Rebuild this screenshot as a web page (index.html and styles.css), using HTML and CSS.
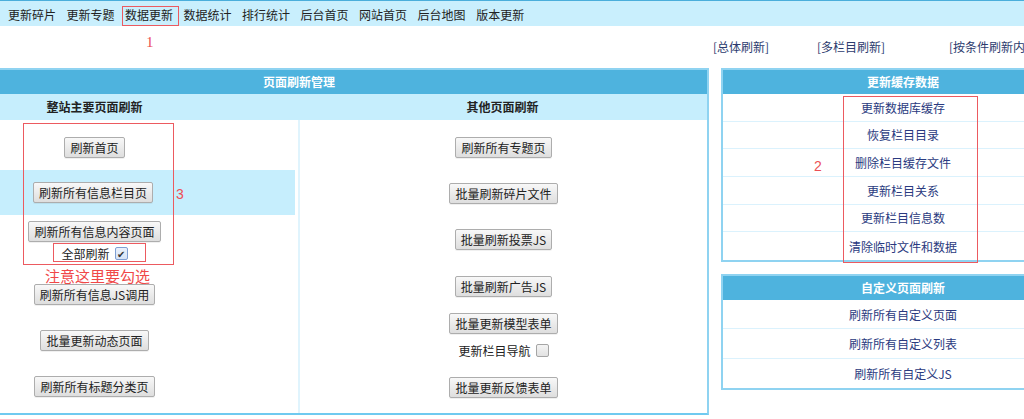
FILE: index.html
```html
<!DOCTYPE html>
<html lang="zh-CN">
<head>
<meta charset="utf-8">
<title>数据更新</title>
<link rel="stylesheet" href="styles.css">
</head>
<body>
<div class="topbar">
  <nav class="menu">
    <a class="menu-item">更新碎片</a>
    <a class="menu-item">更新专题</a>
    <a class="menu-item">数据更新</a>
    <a class="menu-item">数据统计</a>
    <a class="menu-item">排行统计</a>
    <a class="menu-item">后台首页</a>
    <a class="menu-item">网站首页</a>
    <a class="menu-item">后台地图</a>
    <a class="menu-item">版本更新</a>
  </nav>
</div>

<div class="quicklinks">
  <a class="ql ql-a">[总体刷新]</a>
  <a class="ql ql-b">[多栏目刷新]</a>
  <a class="ql">[按条件刷新内容]</a>
</div>

<div class="main">
  <section class="panel panel-pages">
    <div class="panel-head">页面刷新管理</div>
    <div class="subhead">
      <div class="subhead-cell subhead-left">整站主要页面刷新</div>
      <div class="subhead-cell subhead-right">其他页面刷新</div>
    </div>
    <div class="cols">
      <div class="col col-left">
        <div class="row r-first"><button class="btn">刷新首页</button></div>
        <div class="row r-hl"><button class="btn">刷新所有信息栏目页</button></div>
        <div class="row r-stack r-content"><button class="btn">刷新所有信息内容页面</button>
          <label class="chk-line">全部刷新 <span class="chk chk-on">✔</span></label>
        </div>
        <div class="row r-46"><button class="btn">刷新所有信息JS调用</button></div>
        <div class="row r-46"><button class="btn">批量更新动态页面</button></div>
        <div class="row r-46"><button class="btn">刷新所有标题分类页</button></div>
      </div>
      <div class="col col-right">
        <div class="row r-first"><button class="btn">刷新所有专题页</button></div>
        <div class="row r-46"><button class="btn">批量刷新碎片文件</button></div>
        <div class="row r-47"><button class="btn">批量刷新投票JS</button></div>
        <div class="row r-46"><button class="btn">批量刷新广告JS</button></div>
        <div class="row r-stack r-model"><button class="btn">批量更新模型表单</button>
          <label class="chk-line">更新栏目导航 <span class="chk"></span></label>
        </div>
        <div class="row r-48"><button class="btn">批量更新反馈表单</button></div>
      </div>
    </div>
  </section>

  <div class="side">
    <section class="panel panel-side">
      <div class="panel-head">更新缓存数据</div>
      <ul class="link-list list-cache">
        <li>更新数据库缓存</li>
        <li>恢复栏目目录</li>
        <li>删除栏目缓存文件</li>
        <li>更新栏目关系</li>
        <li>更新栏目信息数</li>
        <li>清除临时文件和数据</li>
      </ul>
    </section>
    <section class="panel panel-side">
      <div class="panel-head">自定义页面刷新</div>
      <ul class="link-list list-custom">
        <li>刷新所有自定义页面</li>
        <li>刷新所有自定义列表</li>
        <li>刷新所有自定义JS</li>
      </ul>
    </section>
  </div>
</div>

<div class="mark mark-box box-menu"></div>
<div class="mark mark-num num-1">1</div>
<div class="mark mark-box box-main"></div>
<div class="mark mark-num num-3">3</div>
<div class="mark mark-box box-check"></div>
<div class="mark mark-note">注意这里要勾选</div>
<div class="mark mark-box box-cache"></div>
<div class="mark mark-num num-2">2</div>
</body>
</html>
```

FILE: styles.css
```css
html, body {
  margin: 0;
  padding: 0;
  overflow: hidden;
  background: #fff;
}
body {
  font-family: "Noto Sans CJK SC", "Noto Sans", sans-serif;
  font-size: 12px;
  color: #222;
  position: relative;
  width: 1024px;
  height: 419px;
}

/* top menu bar */
.topbar {
  height: 25px;
  border-top: 1px solid #4aaedb;
  background: #c9effd;
}
.menu {
  display: flex;
  gap: 10.5px;
  padding: 3px 0 0 8px;
  line-height: 22px;
}
.menu-item {
  color: #222;
  white-space: nowrap;
}

/* quick links */
.quicklinks {
  height: 42px;
  display: flex;
  align-items: center;
  padding-left: 713px;
  white-space: nowrap;
  line-height: 16px;
}
.ql {
  color: #2c3b6e;
  flex: none;
}
.ql-a { width: 104px; }
.ql-b { width: 132px; }

/* main area */
.main {
  display: flex;
  gap: 12px;
  align-items: flex-start;
}
.panel {
  border: 2px solid #8fd3f1;
  background: #fff;
  box-sizing: border-box;
  flex: none;
}
.panel-head {
  height: 24px;
  line-height: 24px;
  background: #4eb3de;
  color: #fff;
  font-weight: bold;
  text-align: center;
}
.panel-pages {
  width: 820px;
  margin-left: -111px;
  border-bottom-color: #6fcaf0;
}
.subhead {
  display: flex;
  height: 26px;
  line-height: 26px;
  background: #c6eefd;
  font-weight: bold;
  color: #222;
}
.subhead-cell { text-align: center; }
.subhead-left { width: 407px; }
.subhead-right { flex: 1; }

.cols {
  display: flex;
}
.col {
  display: flex;
  flex-direction: column;
}
.col-left {
  width: 407px;
  padding-bottom: 4px;
}
.col-right {
  flex: 1;
  border-left: 2px solid #e0f4fd;
}
.row {
  display: flex;
  flex-direction: column;
  align-items: center;
  justify-content: center;
  box-sizing: border-box;
}
.r-first { height: 50px; padding-top: 4px; }
.r-hl { height: 45px; background: #c6eefd; margin-right: 3px; }
.r-46 { height: 46px; }
.r-47 { height: 47px; }
.r-48 { height: 48px; }
.r-stack { justify-content: flex-start; }
.r-content { height: 56px; padding-top: 6px; gap: 3px; }
.r-model { height: 54px; padding-top: 4px; gap: 8px; }

.btn {
  font-family: inherit;
  font-size: 12px;
  color: #222;
  height: 21px;
  line-height: 19px;
  padding: 0 5px;
  border: 1px solid #adadad;
  border-radius: 2px;
  background: linear-gradient(#f8f8f8, #dedede);
  box-shadow: 0 1px 0 rgba(0,0,0,0.06);
  white-space: nowrap;
  cursor: pointer;
}

.chk-line {
  display: flex;
  align-items: center;
  gap: 5px;
  line-height: 16px;
  height: 17px;
  color: #222;
}
.chk {
  display: inline-block;
  width: 11px;
  height: 11px;
  border: 1px solid #a5a5a5;
  border-radius: 2px;
  background: linear-gradient(#f4f4f4, #e2e2e2);
  font-size: 10px;
  line-height: 11px;
  text-align: center;
  color: #333;
}
.chk-on {
  border-color: #7f9fd3;
  background: linear-gradient(#eaf1fb, #d6e3f6);
}

/* side panels */
.side {
  display: flex;
  flex-direction: column;
  gap: 12px;
}
.panel-side {
  width: 364px;
}
.link-list {
  list-style: none;
  margin: 0;
  padding: 0;
}
.link-list li {
  box-sizing: border-box;
  border-bottom: 1px solid #dbf2fd;
  text-align: center;
  color: #2a3a80;
  display: flex;
  align-items: center;
  justify-content: center;
}
.link-list li:last-child { border-bottom: none; }
.list-cache li { height: 27.67px; }
.list-custom li { height: 29.33px; }

/* red annotations drawn over the screenshot */
.mark {
  position: absolute;
  color: #ec4f55;
}
.mark-box {
  border: 1px solid #ec5a60;
  box-sizing: border-box;
}
.box-menu { left: 122px; top: 6px; width: 57px; height: 20px; }
.box-main { left: 23px; top: 123px; width: 151px; height: 142px; }
.box-check { left: 53px; top: 243px; width: 93px; height: 19px; }
.box-cache { left: 843px; top: 96px; width: 135px; height: 167px; }
.mark-num {
  font-size: 14px;
  line-height: 16px;
}
.num-1 { left: 146px; top: 34px; font-family: "Liberation Serif", serif; font-size: 15px; }
.num-2 { left: 814px; top: 158px; font-family: "Liberation Sans", sans-serif; }
.num-3 { left: 176px; top: 186px; font-family: "Liberation Sans", sans-serif; }
.mark-note {
  left: 45px;
  top: 266px;
  font-size: 15px;
  line-height: 20px;
  color: #f04848;
}
```
